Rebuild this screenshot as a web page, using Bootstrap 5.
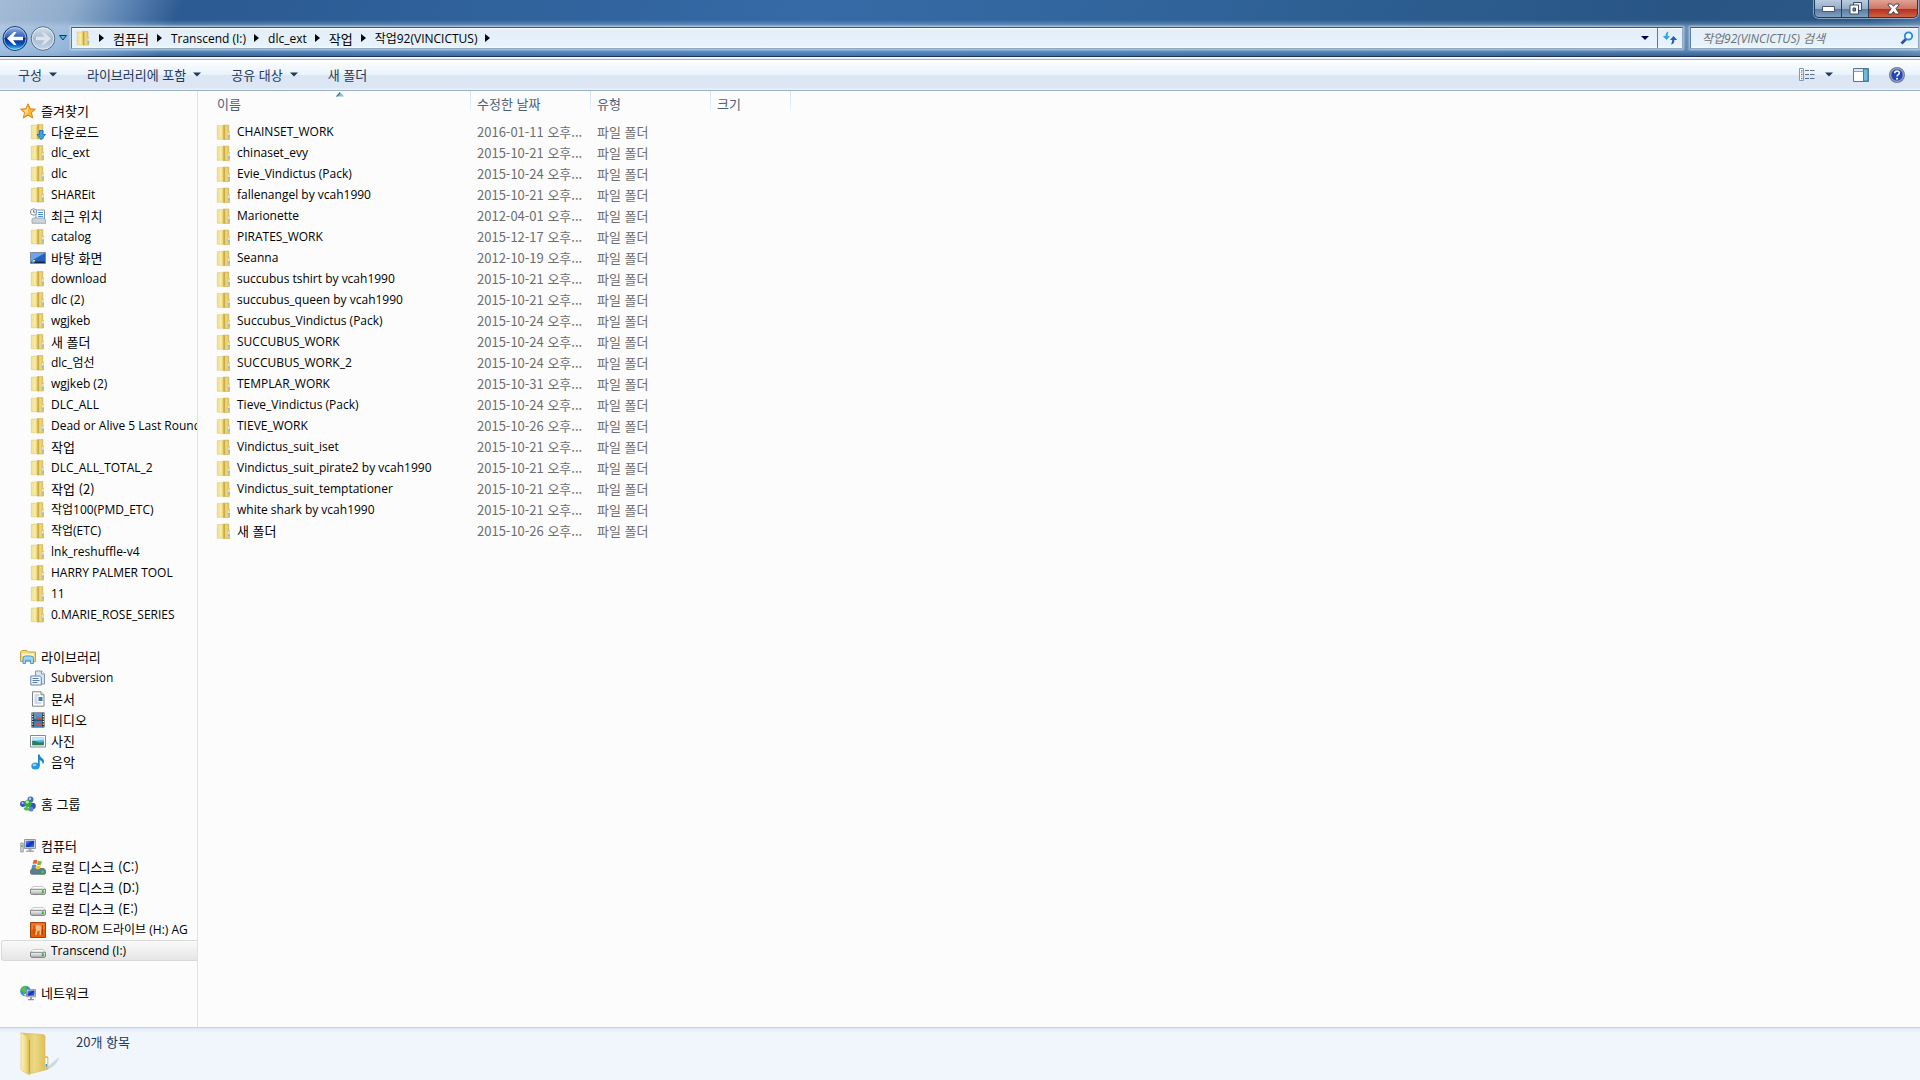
<!DOCTYPE html>
<html lang="ko">
<head>
<meta charset="utf-8">
<meta name="viewport" content="width=device-width, initial-scale=1">
<title>작업92(VINCICTUS)</title>
<link href="https://cdn.jsdelivr.net/npm/bootstrap@5.3.0/dist/css/bootstrap.min.css" rel="stylesheet">
<style>
body{font:12px/21px "Open Sans","Noto Sans CJK KR",sans-serif;color:#000;background:#fcfcfc}
.ko{font-size:13px;font-family:"Noto Sans CJK KR",sans-serif}
svg{flex:none;display:block}
a{color:inherit;text-decoration:none}
button{border:0;background:none;padding:0;color:inherit;font:inherit}
/* glass frame */
.glass{border-bottom:1px solid #1b3358;background:
 linear-gradient(to bottom,transparent 20px,rgba(190,215,240,.45) 27px,rgba(160,200,240,.45) 50px,rgba(120,170,220,.15) 56px),
 linear-gradient(112deg,#a5bbd6 0,#8fabcc 70px,#6088b6 115px,#2c5a92 170px,#2f6099 400px,#356aa6 760px,#31659c 1050px,#285584 1560px,#2b5885 1740px,#5f86af 1830px,#a4bcd6 1890px)}
.winrow{height:26px}
.winbtns{border:1px solid #1f3a5c;border-top:0;border-radius:0 0 5px 5px;overflow:hidden;box-shadow:0 0 0 1px rgba(255,255,255,.45);height:18px;margin-right:2px}
.winbtns button{width:27px;background:linear-gradient(#b9cbe0 0,#94abc6 9px,#5a7ba2 9px,#86a5c6 18px);border-right:1px solid #26415f;display:flex;align-items:center;justify-content:center}
.winbtns button:last-child{width:48px;border:0;background:linear-gradient(#dfa396 0,#cf7262 9px,#b32f1a 9px,#d5664a 18px)}
.addr-row{height:30px;padding:1px 1px 7px 2px}
.recentbtn{padding:0 4px 0 2px}
.fieldbox{height:22px;border:1px solid #8fa9c0;border-top-color:#3d5a7c;border-left-color:#5f7d9e;background:linear-gradient(#fff 0,#e3eef8 2px,#e6f2fd 18px,#f6fbff 20px);box-shadow:0 0 2px 1px rgba(225,238,250,.7)}
.pathbox{margin-right:7px}
.crumb{padding:0 8px 0 9px;line-height:19px}
.findbox{width:229px}
.findbox input{border:0;background:none;outline:0;width:100%;min-width:0;padding:0 0 0 11px;font-style:italic}
.findbox input::placeholder{color:#6d7075;opacity:1}
/* command bar */
.cmdbar{height:34px;padding:2px 15px 0 3px;color:#1e395b;border-bottom:1px solid #9fb0c9;background:linear-gradient(#fff 0,#e9e9f4 2px,#b1abce 2px,#b1abce 3px,#fdfeff 3px,#e9f2fb 18px,#dce6f4 18px,#dce7f5 31px,#e9f1fa 32px)}
.cmdbar button{padding:0 15px;gap:7px;display:flex;align-items:center}
.cmdbar .tool{padding:0;gap:10px}
.toolset{gap:20px}
/* navigation pane */
.navpane{width:198px;border-right:1px solid #d6e5f5;padding:9px 0 0 1px;overflow:hidden}
.navpane ul{margin:0 0 21px;padding:0;list-style:none}
.navpane a{display:flex;align-items:center;gap:5px;height:21px;padding-left:29px;white-space:nowrap;overflow:hidden}
.navpane a.ko{line-height:19px}
.navpane a.top0{padding-left:19px}
.navpane a.picked{border:1px solid #d9d9d9;border-right:0;border-radius:3px 0 0 3px;padding-left:28px;background:linear-gradient(#fafafa,#e5e5e5)}
/* file list */
.filelist{table-layout:fixed;width:593px;border-collapse:collapse}
.filelist th{position:relative;height:31px;padding:3px 0 0 6px;font-weight:400;color:#4c607a;vertical-align:top;line-height:20px;background:linear-gradient(#cfe2f5,#e6f0fa) no-repeat right 0 top 0/1px 20px}
.filelist th:first-child{padding-left:19px}
.filelist td{height:21px;padding:0 0 0 6px;color:#6d6d6d;white-space:nowrap;overflow:hidden;line-height:20px;vertical-align:top}
.filelist td:first-child{padding-left:18px;color:#000}
.filelist td a{display:flex;align-items:center;gap:5px}
.sortmark{position:absolute;left:138px;top:1px}
.statusbar{height:53px;border-top:1px solid #c4d2e6;background:linear-gradient(#dde8f5 0,#f1f5fc 4px,#f1f5fc);color:#1e395b;padding:3px 0 0 18px}
</style>
</head>
<body>
<svg width="0" height="0" class="position-absolute" aria-hidden="true">
<defs>
 <linearGradient id="gy" x1="0" x2="1"><stop offset="0" stop-color="#fbf3b8"/><stop offset=".55" stop-color="#efdc86"/><stop offset="1" stop-color="#d9b94c"/></linearGradient>
 <linearGradient id="gd" x1="0" x2="1"><stop offset="0" stop-color="#d2b04a"/><stop offset=".5" stop-color="#ecd985"/><stop offset="1" stop-color="#dab950"/></linearGradient>
 <linearGradient id="gback" x1="0" y1="0" x2="0" y2="1"><stop offset="0" stop-color="#9db9e8"/><stop offset=".45" stop-color="#2d5cb8"/><stop offset=".5" stop-color="#062c86"/><stop offset=".75" stop-color="#0a56bd"/><stop offset="1" stop-color="#4fd8fb"/></linearGradient>
 <linearGradient id="gfwd" x1="0" y1="0" x2="0" y2="1"><stop offset="0" stop-color="#d5e0ec"/><stop offset=".5" stop-color="#a8bbd0"/><stop offset="1" stop-color="#c5d5e6"/></linearGradient>
 <linearGradient id="gscr" x1="0" y1="0" x2="1" y2="1"><stop offset="0" stop-color="#6fa0ee"/><stop offset=".5" stop-color="#0b2fc0"/><stop offset="1" stop-color="#4d7fe0"/></linearGradient>
 <linearGradient id="gdisk" x1="0" y1="0" x2="0" y2="1"><stop offset="0" stop-color="#f7f7f7"/><stop offset="1" stop-color="#a9abad"/></linearGradient>
 <symbol id="folder" viewBox="0 0 16 16"><path d="M1.300 1.200h5v13.500h-5z" fill="#f3e597" stroke="#dcc572" stroke-width=".6"/><path d="M7 .6h5.800v5.900l.7.7V15H7z" fill="url(#gd)" stroke="#cfae48" stroke-width=".6"/><path d="M4.200 2 8 .5v15L4.200 14z" fill="url(#gy)"/><path d="M8.200 1v14" stroke="#bf9930" stroke-width=".8"/><path d="M12.500 8h1v5h-1z" fill="#fff"/><path d="M12.500 10.500h1v2.500h-1z" fill="#3ba4dc"/></symbol>
 <symbol id="down" viewBox="0 0 16 16"><use href="#folder"/><path d="M9.500 6.500h3.500v4h2.500L11.200 15.700 7 10.500h2.500z" fill="#33a5e8" stroke="#1668aa" stroke-width=".8"/></symbol>
 <symbol id="star" viewBox="0 0 16 16"><path d="M8 .8l2.200 5 5.200.4-4 3.500 1.300 5.200L8 12.200l-4.600 2.700 1.200-5.200L.6 6.200l5.200-.4z" fill="#ffb52e" stroke="#e07a1b"/><path d="M8 3v7L4.300 12.500l1-3.500L3 7l3.600-.3z" fill="#ffe38f"/></symbol>
 <symbol id="recent" viewBox="0 0 16 16"><path d="M6 2h8.500v9H6z" fill="#fff" stroke="#8796a5"/><path d="M8 4.500h5M8 6.500h5M8 8.500h5" stroke="#4a94dc"/><path d="M2 11l1.500-1h11l1.200 3v2.300H2z" fill="#ced3d8" stroke="#8b949d" stroke-width=".7"/><circle cx="3.600" cy="4" r="3.200" fill="#f2f6f9" stroke="#84919d"/><path d="M3.600 2v2.200h1.800" fill="none" stroke="#456" stroke-width=".8"/></symbol>
 <symbol id="desk" viewBox="0 0 16 16"><path d="M.5 2.500h15v11H.5z" fill="#2460bd" stroke="#7c8ca4"/><path d="M1 3h14L1 11z" fill="#6da4ea"/><path d="M1 11.500h14V13H1z" fill="#152847"/><circle cx="3" cy="11.200" r="1.800" fill="#46a7ee"/><path d="M3 10h2v1.200H3z" fill="#ffda43"/></symbol>
 <symbol id="lib" viewBox="0 0 16 16"><path d="M.5 3 2 1.500h5L8.500 3h7v9.500H.5z" fill="#f0d978" stroke="#c7a245"/><path d="M2 4.500h12V7H2z" fill="#fff5c1"/><path d="M3 14.500V9.500Q3 7 5.500 7h5Q13.500 7 13.500 9.500v5h-3v-3.300h-5v3.300z" fill="#9fd4f3" stroke="#4b9bd0"/></symbol>
 <symbol id="svn" viewBox="0 0 16 16"><path d="M5.500 1h6l3 3v10h-9z" fill="#d7e5f2" stroke="#7e98b5"/><path d="M11.500 1v3h3" fill="#fff" stroke="#7e98b5"/><path d="M.8 6h9l1.500 1.500V15H.8z" fill="#eff5fb" stroke="#6683a9"/><path d="M2.500 8.500h6M2.500 10.500h7M2.500 12.500h5" stroke="#597eaf"/></symbol>
 <symbol id="doc" viewBox="0 0 16 16"><path d="M2.500.8h8.500l3 3v11.400H2.500z" fill="#fff" stroke="#7d858c"/><path d="M11 .8v3h3" fill="#dce5ed" stroke="#7d858c"/><path d="M4.500 4h5M4.500 6h3M4.500 8h3M4.500 10h3M4.500 12h7" stroke="#9fb4c9"/><path d="M8.500 6h4v4h-4z" fill="#3580bd"/></symbol>
 <symbol id="film" viewBox="0 0 16 16"><path d="M1.500.5h13v15h-13z" fill="#292d30"/><path d="M4 1h8v6.500H4z" fill="#4a9bd8"/><path d="M4 8.500h8V15H4z" fill="#3382c5"/><path d="M6 4l4 1.500 2-1v3H7zM5 13l3-3 4 2-2 1z" fill="#cf543b"/><path d="M2.700 1.500v13M13.300 1.500v13" stroke="#fff" stroke-width="1.200" stroke-dasharray="1.200 1.300"/></symbol>
 <symbol id="photo" viewBox="0 0 16 16"><path d="M.5 2.500h15v11.500H.5z" fill="#fff" stroke="#86898c"/><path d="M2.200 4.200h11.600v8H2.200z" fill="#55b5e6"/><path d="M2.200 4.200h11.600v2.500L2.200 8z" fill="#bfe9fa"/><path d="M2.200 8q3-1 6 1.200 3 1 5.600-1v4H2.200z" fill="#2b8063"/></symbol>
 <symbol id="note" viewBox="0 0 16 16"><ellipse cx="5.500" cy="12" rx="4.200" ry="3.500" fill="#2b97e0"/><ellipse cx="4.500" cy="11" rx="2" ry="1.300" fill="#8fd0f8"/><path d="M8 12V.5h1.700Q10 3 12.500 4.500 15.500 7 12.500 11 13.500 7.500 9.700 6v6z" fill="#1f86d2"/></symbol>
 <symbol id="home" viewBox="0 0 16 16"><circle cx="10.500" cy="3.500" r="3" fill="#4467c9"/><circle cx="3" cy="8" r="3" fill="#3458bd"/><circle cx="12.500" cy="10" r="3.300" fill="#3455b4"/><circle cx="11" cy="13" r="2.500" fill="#5a83df"/><circle cx="8" cy="7.500" r="3.600" fill="#35a83b"/><path d="M3.500 12.500q3-3.500 6 0l-1 2H5z" fill="#4fbd49"/><circle cx="7.300" cy="6" r="1.600" fill="#b4edae"/><circle cx="10" cy="2.700" r="1.200" fill="#bfd0fa"/><circle cx="2.600" cy="7" r="1.100" fill="#bfd0fa"/></symbol>
 <symbol id="pc" viewBox="0 0 16 16"><path d="M.7 5h2.600v9H.7z" fill="#d5d8dc" stroke="#80858b" stroke-width=".7"/><path d="M1.200 7h1.300v2H1.200z" fill="#3bc23b"/><path d="M4.500 1.500h11v9h-11z" fill="#d8dce0" stroke="#9398a0"/><path d="M5.800 2.800h8.400v6.400H5.800z" fill="url(#gscr)"/><path d="M8.500 11h3v1.500h2.500V14H6v-1.500h2.500z" fill="#a8acb2"/></symbol>
 <symbol id="disk" viewBox="0 0 16 16"><path d="M3 6.500h10l2.500 3h-15z" fill="#fafafa" stroke="#b4b6b8" stroke-width=".7"/><path d="M.5 9.300h15v4.200l-1 .9h-13l-1-.9z" fill="url(#gdisk)" stroke="#77797c" stroke-width=".9"/><path d="M11.800 10.300h2v2.700h-2z" fill="#28c21c"/></symbol>
 <symbol id="diskc" viewBox="0 0 16 16"><path d="M2 9.500h12l1.500 2v3l-1 .8h-13l-1-.8v-3z" fill="#557f91" stroke="#5c6d74" stroke-width=".8"/><path d="M11.500 11.500h2V14h-2z" fill="#3fe02a"/><path d="M3.500 1.500q2.200-1.500 4 0L6.500 5Q4.500 4 2.600 5z" fill="#ed5b2b"/><path d="M8 1.800q2 1 4 0L11 5.500q-2 1-4 0z" fill="#76b933"/><path d="M2.300 6q2-1 4 0l-.9 3.500q-2-1-4 0z" fill="#4495dc"/><path d="M6.800 6.300q2 1 4 0l-1 3.500q-2 1-4 0z" fill="#fac22c"/></symbol>
 <symbol id="bd" viewBox="0 0 16 16"><path d="M.5.5h15v15H.5z" fill="#e95d09" stroke="#a6430d"/><path d="M1.500 1.500h13v6h-13z" fill="#f2802a"/><path d="M6 3.500q4-1 5 1v8.500H9.600V8.500L7.500 9 6.500 13H5l1-5z" fill="#f7bd83"/><path d="M4 3v9M12.500 3v10" stroke="#bb3c06"/></symbol>
 <symbol id="net" viewBox="0 0 16 16"><circle cx="5.500" cy="6" r="5.300" fill="#2f8ed6"/><path d="M2 2.200q3-2.500 5-1L5.500 4 7 6l-3 2.500L1 5z" fill="#54c243"/><path d="M3 9.500l3-1v2.500z" fill="#bfe7fb"/><path d="M6.500 4.500h9v7.300h-9z" fill="#d7dadf" stroke="#868c94" stroke-width=".8"/><path d="M7.500 5.500h7v5.300h-7z" fill="url(#gscr)"/><path d="M10 12.200h2v1.800h2v1.300H8V14h2z" fill="#8e949c"/></symbol>
 <symbol id="crumbarrow" viewBox="0 0 5 8"><path d="M0 0l5 4-5 4z" fill="#000"/></symbol>
 <symbol id="tri" viewBox="0 0 8 4"><path d="M0 0h8L4 4z"/></symbol>
</defs>
</svg>

<div class="d-flex flex-column vh-100 overflow-hidden">
 <header class="glass">
  <div class="winrow d-flex justify-content-end">
   <div class="winbtns d-flex">
    <button aria-label="최소화"><svg width="13" height="6"><path d="M.5.5h12v5H.5z" fill="#fff" stroke="#4b5668"/></svg></button>
    <button aria-label="이전 크기로 복원"><svg width="13" height="13"><path d="M4.500.5h8v8h-8z" fill="#e9eef4" stroke="#414c5e"/><path d="M1 3h8.500v9H1z" fill="#fff" stroke="#414c5e"/><path d="M4 6h2.500v3H4z" fill="#71839c" stroke="#414c5e"/></svg></button>
    <button aria-label="닫기"><svg width="13" height="12"><path d="M1 1h3.600L6.500 3.300 8.400 1H12v1L8.900 5.700 12 10v1H8.400L6.500 8.600 4.600 11H1v-1l3.100-4.300L1 2z" fill="#fff" stroke="#4c4450"/></svg></button>
   </div>
  </div>
  <div class="addr-row d-flex align-items-center">
   <nav class="d-flex align-items-center" aria-label="탐색">
    <button aria-label="뒤로"><svg width="27" height="27" viewBox="0 0 27 27"><circle cx="13" cy="13.500" r="12" fill="url(#gback)" stroke="#1b3a6c"/><circle cx="13" cy="13.500" r="10.900" fill="none" stroke="#d1e3f8" stroke-opacity=".6"/><path d="M5 13.500l7-6.500h2.500l-3.300 4.700H21v3.600h-9.800l3.300 4.700H12z" fill="#fff"/></svg></button>
    <button aria-label="앞으로"><svg width="28" height="27" viewBox="0 0 28 27"><circle cx="14" cy="13.500" r="11.800" fill="url(#gfwd)" stroke="#546d8c"/><circle cx="14" cy="13.500" r="10.700" fill="none" stroke="#eef4fa" stroke-opacity=".7"/><path d="M22 13.500l-7-6h-2.500l3.300 4.200H7v3.600h8.800l-3.300 4.200H15z" fill="#dbe5ef"/></svg></button>
    <button class="recentbtn" aria-label="최근 페이지"><svg width="8" height="6"><path d="M.5.5h7L4 5z" fill="#55b4ea" stroke="#103a6c"/></svg></button>
   </nav>
   <div class="fieldbox pathbox d-flex align-items-center flex-grow-1">
    <svg class="ms-1 me-2" width="15" height="17"><use href="#folder"/></svg>
    <svg width="5" height="8"><use href="#crumbarrow"/></svg>
    <a href="#" class="crumb ko">컴퓨터</a><svg width="5" height="8"><use href="#crumbarrow"/></svg>
    <a href="#" class="crumb">Transcend (I:)</a><svg width="5" height="8"><use href="#crumbarrow"/></svg>
    <a href="#" class="crumb">dlc_ext</a><svg width="5" height="8"><use href="#crumbarrow"/></svg>
    <a href="#" class="crumb ko">작업</a><svg width="5" height="8"><use href="#crumbarrow"/></svg>
    <a href="#" class="crumb">작업92(VINCICTUS)</a><svg width="5" height="8"><use href="#crumbarrow"/></svg>
    <button class="ms-auto me-2 h-100" aria-label="이전 위치"><svg width="8" height="4" fill="#00004f"><use href="#tri"/></svg></button>
    <button class="border-start border-secondary h-100 px-1" aria-label="새로 고침"><svg width="16" height="14" viewBox="0 0 16 14"><path d="M6.500.5Q3.500 1 3.500 5H.8L4.500 9 8 5H5.800Q5.500 2.500 6.500.5z" fill="#31a4e4"/><path d="M9 13.500q3.500-.5 3.300-4.500h2.900L11.500 5 8 9h2.200q0 2.500-1.200 4.500z" fill="#2360b8"/></svg></button>
   </div>
   <form class="fieldbox findbox d-flex align-items-center pe-1">
    <input type="search" placeholder="작업92(VINCICTUS) 검색" aria-label="검색">
    <button type="button" aria-label="검색"><svg width="14" height="14" viewBox="0 0 14 14"><path d="M6 8l-4.500 4.500" stroke="#2450a8" stroke-width="2.600"/><circle cx="8.500" cy="5" r="3.700" fill="#e6f6ff" stroke="#2f86d2" stroke-width="1.800"/></svg></button>
   </form>
  </div>
 </header>

 <div class="cmdbar d-flex align-items-center flex-shrink-0 ko" role="toolbar">
  <button>구성 <svg width="8" height="5" fill="#1e395b"><use href="#tri"/></svg></button>
  <button>라이브러리에 포함 <svg width="8" height="5" fill="#1e395b"><use href="#tri"/></svg></button>
  <button>공유 대상 <svg width="8" height="5" fill="#1e395b"><use href="#tri"/></svg></button>
  <button>새 폴더</button>
  <div class="toolset d-flex align-items-center ms-auto">
   <button class="tool" aria-label="보기"><svg width="16" height="13" viewBox="0 0 16 13"><path d="M.5.500h4v12h-4z" fill="#fff" stroke="#8797ad"/><path d="M1.500 4.500h2M1.500 8.500h2" stroke="#b4c0d0"/><path d="M2 2h1.500v1.500H2z" fill="#3d89d1"/><path d="M2 5.700h1.500v1.500H2z" fill="#c94a35"/><path d="M2 9.700h1.500v1.500H2z" fill="#3d89d1"/><path d="M6 2.500h4M11 2.500h4.500M6 6.500h4M11 6.500h4.500M6 10.500h4M11 10.500h4.500" stroke="#5c6f8c"/></svg><svg width="8" height="5" fill="#1e395b"><use href="#tri"/></svg></button>
   <button class="tool" aria-label="미리 보기 창"><svg width="16" height="14" viewBox="0 0 16 14"><path d="M.5.500h15v13H.5z" fill="#fff" stroke="#5d7590"/><path d="M1 1h9v2H1z" fill="#dce6f0"/><path d="M10.500 1h4.500v12h-4.500z" fill="#67bddc" stroke="#427f9f"/><path d="M1 3.500h9" stroke="#8da1b6"/></svg></button>
   <button class="tool" aria-label="도움말"><svg width="16" height="16" viewBox="0 0 16 16"><circle cx="8" cy="8" r="7.400" fill="#2447b3" stroke="#7c828e" stroke-width="1.200"/><circle cx="8" cy="8" r="6.300" fill="none" stroke="#c4cbdd" stroke-width=".9"/><path d="M5.700 6.300Q5.700 4 8 4t2.300 2.100Q10.300 7.200 9 7.900 8 8.400 8 9.500" fill="none" stroke="#fff" stroke-width="1.500"/><circle cx="8" cy="11.700" r="1" fill="#fff"/></svg></button>
  </div>
 </div>

 <div class="d-flex flex-grow-1 overflow-hidden">
  <nav class="navpane flex-shrink-0" aria-label="탐색 창">
   <ul>
    <li><a href="#" class="top0 ko"><svg width="16" height="16"><use href="#star"/></svg>즐겨찾기</a></li>
    <li><a href="#" class="ko"><svg width="16" height="16"><use href="#down"/></svg>다운로드</a></li>
    <li><a href="#"><svg width="16" height="16"><use href="#folder"/></svg>dlc_ext</a></li>
    <li><a href="#"><svg width="16" height="16"><use href="#folder"/></svg>dlc</a></li>
    <li><a href="#"><svg width="16" height="16"><use href="#folder"/></svg>SHAREit</a></li>
    <li><a href="#" class="ko"><svg width="16" height="16"><use href="#recent"/></svg>최근 위치</a></li>
    <li><a href="#"><svg width="16" height="16"><use href="#folder"/></svg>catalog</a></li>
    <li><a href="#" class="ko"><svg width="16" height="16"><use href="#desk"/></svg>바탕 화면</a></li>
    <li><a href="#"><svg width="16" height="16"><use href="#folder"/></svg>download</a></li>
    <li><a href="#"><svg width="16" height="16"><use href="#folder"/></svg>dlc (2)</a></li>
    <li><a href="#"><svg width="16" height="16"><use href="#folder"/></svg>wgjkeb</a></li>
    <li><a href="#" class="ko"><svg width="16" height="16"><use href="#folder"/></svg>새 폴더</a></li>
    <li><a href="#"><svg width="16" height="16"><use href="#folder"/></svg>dlc_엄선</a></li>
    <li><a href="#"><svg width="16" height="16"><use href="#folder"/></svg>wgjkeb (2)</a></li>
    <li><a href="#"><svg width="16" height="16"><use href="#folder"/></svg>DLC_ALL</a></li>
    <li><a href="#"><svg width="16" height="16"><use href="#folder"/></svg>Dead or Alive 5 Last Round</a></li>
    <li><a href="#" class="ko"><svg width="16" height="16"><use href="#folder"/></svg>작업</a></li>
    <li><a href="#"><svg width="16" height="16"><use href="#folder"/></svg>DLC_ALL_TOTAL_2</a></li>
    <li><a href="#" class="ko"><svg width="16" height="16"><use href="#folder"/></svg>작업 (2)</a></li>
    <li><a href="#"><svg width="16" height="16"><use href="#folder"/></svg>작업100(PMD_ETC)</a></li>
    <li><a href="#"><svg width="16" height="16"><use href="#folder"/></svg>작업(ETC)</a></li>
    <li><a href="#"><svg width="16" height="16"><use href="#folder"/></svg>lnk_reshuffle-v4</a></li>
    <li><a href="#"><svg width="16" height="16"><use href="#folder"/></svg>HARRY PALMER TOOL</a></li>
    <li><a href="#"><svg width="16" height="16"><use href="#folder"/></svg>11</a></li>
    <li><a href="#"><svg width="16" height="16"><use href="#folder"/></svg>0.MARIE_ROSE_SERIES</a></li>
   </ul>
   <ul>
    <li><a href="#" class="top0 ko"><svg width="16" height="16"><use href="#lib"/></svg>라이브러리</a></li>
    <li><a href="#"><svg width="16" height="16"><use href="#svn"/></svg>Subversion</a></li>
    <li><a href="#" class="ko"><svg width="16" height="16"><use href="#doc"/></svg>문서</a></li>
    <li><a href="#" class="ko"><svg width="16" height="16"><use href="#film"/></svg>비디오</a></li>
    <li><a href="#" class="ko"><svg width="16" height="16"><use href="#photo"/></svg>사진</a></li>
    <li><a href="#" class="ko"><svg width="16" height="16"><use href="#note"/></svg>음악</a></li>
   </ul>
   <ul>
    <li><a href="#" class="top0 ko"><svg width="16" height="16"><use href="#home"/></svg>홈 그룹</a></li>
   </ul>
   <ul>
    <li><a href="#" class="top0 ko"><svg width="16" height="16"><use href="#pc"/></svg>컴퓨터</a></li>
    <li><a href="#" class="ko"><svg width="16" height="16"><use href="#diskc"/></svg>로컬 디스크 (C:)</a></li>
    <li><a href="#" class="ko"><svg width="16" height="16"><use href="#disk"/></svg>로컬 디스크 (D:)</a></li>
    <li><a href="#" class="ko"><svg width="16" height="16"><use href="#disk"/></svg>로컬 디스크 (E:)</a></li>
    <li><a href="#"><svg width="16" height="16"><use href="#bd"/></svg>BD-ROM 드라이브 (H:) AG</a></li>
    <li><a href="#" class="picked" aria-current="true"><svg width="16" height="16"><use href="#disk"/></svg>Transcend (I:)</a></li>
   </ul>
   <ul>
    <li><a href="#" class="top0 ko"><svg width="16" height="16"><use href="#net"/></svg>네트워크</a></li>
   </ul>
  </nav>

  <main class="flex-grow-1 overflow-auto">
   <table class="filelist">
    <colgroup><col style="width:273px"><col style="width:120px"><col style="width:120px"><col style="width:80px"></colgroup>
    <thead><tr class="ko"><th scope="col" aria-sort="ascending">이름<svg class="sortmark" width="8" height="5"><path d="M0 4.500 4 0l4 4.500z" fill="#7fc0dc"/><path d="M0 4.500 4 0v1.500L1.500 4.500z" fill="#3c5e6f"/></svg></th><th scope="col">수정한 날짜</th><th scope="col">유형</th><th scope="col">크기</th></tr></thead>
    <tbody>
     <tr><td><a href="#"><svg width="16" height="17"><use href="#folder"/></svg>CHAINSET_WORK</a></td><td class="ko">2016-01-11 오후...</td><td class="ko">파일 폴더</td><td></td></tr>
     <tr><td><a href="#"><svg width="16" height="17"><use href="#folder"/></svg>chinaset_evy</a></td><td class="ko">2015-10-21 오후...</td><td class="ko">파일 폴더</td><td></td></tr>
     <tr><td><a href="#"><svg width="16" height="17"><use href="#folder"/></svg>Evie_Vindictus (Pack)</a></td><td class="ko">2015-10-24 오후...</td><td class="ko">파일 폴더</td><td></td></tr>
     <tr><td><a href="#"><svg width="16" height="17"><use href="#folder"/></svg>fallenangel by vcah1990</a></td><td class="ko">2015-10-21 오후...</td><td class="ko">파일 폴더</td><td></td></tr>
     <tr><td><a href="#"><svg width="16" height="17"><use href="#folder"/></svg>Marionette</a></td><td class="ko">2012-04-01 오후...</td><td class="ko">파일 폴더</td><td></td></tr>
     <tr><td><a href="#"><svg width="16" height="17"><use href="#folder"/></svg>PIRATES_WORK</a></td><td class="ko">2015-12-17 오후...</td><td class="ko">파일 폴더</td><td></td></tr>
     <tr><td><a href="#"><svg width="16" height="17"><use href="#folder"/></svg>Seanna</a></td><td class="ko">2012-10-19 오후...</td><td class="ko">파일 폴더</td><td></td></tr>
     <tr><td><a href="#"><svg width="16" height="17"><use href="#folder"/></svg>succubus tshirt by vcah1990</a></td><td class="ko">2015-10-21 오후...</td><td class="ko">파일 폴더</td><td></td></tr>
     <tr><td><a href="#"><svg width="16" height="17"><use href="#folder"/></svg>succubus_queen by vcah1990</a></td><td class="ko">2015-10-21 오후...</td><td class="ko">파일 폴더</td><td></td></tr>
     <tr><td><a href="#"><svg width="16" height="17"><use href="#folder"/></svg>Succubus_Vindictus (Pack)</a></td><td class="ko">2015-10-24 오후...</td><td class="ko">파일 폴더</td><td></td></tr>
     <tr><td><a href="#"><svg width="16" height="17"><use href="#folder"/></svg>SUCCUBUS_WORK</a></td><td class="ko">2015-10-24 오후...</td><td class="ko">파일 폴더</td><td></td></tr>
     <tr><td><a href="#"><svg width="16" height="17"><use href="#folder"/></svg>SUCCUBUS_WORK_2</a></td><td class="ko">2015-10-24 오후...</td><td class="ko">파일 폴더</td><td></td></tr>
     <tr><td><a href="#"><svg width="16" height="17"><use href="#folder"/></svg>TEMPLAR_WORK</a></td><td class="ko">2015-10-31 오후...</td><td class="ko">파일 폴더</td><td></td></tr>
     <tr><td><a href="#"><svg width="16" height="17"><use href="#folder"/></svg>Tieve_Vindictus (Pack)</a></td><td class="ko">2015-10-24 오후...</td><td class="ko">파일 폴더</td><td></td></tr>
     <tr><td><a href="#"><svg width="16" height="17"><use href="#folder"/></svg>TIEVE_WORK</a></td><td class="ko">2015-10-26 오후...</td><td class="ko">파일 폴더</td><td></td></tr>
     <tr><td><a href="#"><svg width="16" height="17"><use href="#folder"/></svg>Vindictus_suit_iset</a></td><td class="ko">2015-10-21 오후...</td><td class="ko">파일 폴더</td><td></td></tr>
     <tr><td><a href="#"><svg width="16" height="17"><use href="#folder"/></svg>Vindictus_suit_pirate2 by vcah1990</a></td><td class="ko">2015-10-21 오후...</td><td class="ko">파일 폴더</td><td></td></tr>
     <tr><td><a href="#"><svg width="16" height="17"><use href="#folder"/></svg>Vindictus_suit_temptationer</a></td><td class="ko">2015-10-21 오후...</td><td class="ko">파일 폴더</td><td></td></tr>
     <tr><td><a href="#"><svg width="16" height="17"><use href="#folder"/></svg>white shark by vcah1990</a></td><td class="ko">2015-10-21 오후...</td><td class="ko">파일 폴더</td><td></td></tr>
     <tr><td><a href="#" class="ko"><svg width="16" height="17"><use href="#folder"/></svg>새 폴더</a></td><td class="ko">2015-10-26 오후...</td><td class="ko">파일 폴더</td><td></td></tr>
    </tbody>
   </table>
  </main>
 </div>

 <footer class="statusbar d-flex align-items-start flex-shrink-0 ko">
  <svg width="42" height="46" viewBox="0 0 42 46" class="me-3"><path d="M27 38l14-12q-1 8-12 13z" fill="#8a94a3" opacity=".3"/><path d="M3 2 25 3.500q2 .3 2 2V25l3 1v12l-3 1-16 4z" fill="url(#gd)" stroke="#d9be66" stroke-width=".7"/><path d="M3 1.500 10 6q1.500 1 1.500 3v35L4.500 40Q3 39 3 37z" fill="url(#gy)" stroke="#e0c878" stroke-width=".7"/><path d="M11.500 9v33" stroke="#b8963c" stroke-width=".8"/><path d="M27.500 27h1.800v10h-1.800z" fill="#fff"/><path d="M27.700 33h1.400v3.500h-1.400z" fill="#3a9cdb"/></svg>
  <span>20개 항목</span>
 </footer>
</div>
<script src="https://cdn.jsdelivr.net/npm/bootstrap@5.3.0/dist/js/bootstrap.bundle.min.js"></script>
</body>
</html>
